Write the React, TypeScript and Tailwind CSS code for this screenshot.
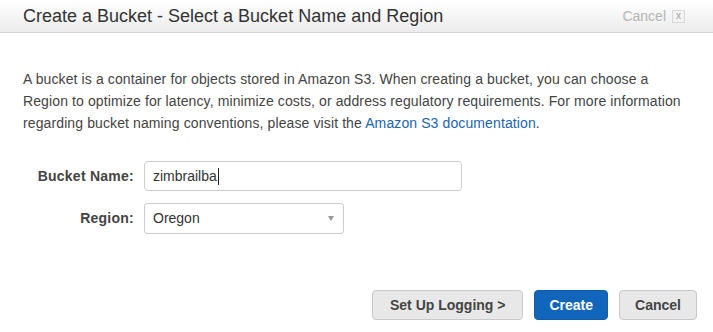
export default function App() {
  return (
    <div
      className="h-[332px] w-[713px] overflow-hidden bg-white text-[#444]"
      style={{ fontFamily: '"Liberation Sans", Arial, sans-serif' }}
    >
      {/* header */}
      <div className="flex h-[33px] items-center justify-between border-b border-[#d5d5d5] bg-gradient-to-b from-white to-[#ececec] pl-[23px] pr-[28px]">
        <h1 className="text-[18px] leading-none text-[#333]">
          Create a Bucket - Select a Bucket Name and Region
        </h1>
        <button className="flex items-center gap-[6px] text-[14px] text-[#b4b4b4]">
          Cancel
          <span className="flex h-[13px] w-[13px] items-center justify-center border border-[#d8d8d8] bg-[#f4f4f4] text-[10px] leading-none text-[#a0a0a0]">
            x
          </span>
        </button>
      </div>

      {/* intro */}
      <p className="mt-[35px] px-[23px] text-[14px] leading-[22px] tracking-[0.11px] text-[#444]">
        A bucket is a container for objects stored in Amazon S3. When creating a bucket, you can choose a
        <br />
        Region to optimize for latency, minimize costs, or address regulatory requirements. For more information
        <br />
        regarding bucket naming conventions, please visit the{" "}
        <a className="text-[#1a64b4]">Amazon S3 documentation</a>.
      </p>

      {/* form */}
      <div className="mt-[27px] grid grid-cols-[134px_auto] items-center gap-x-[10px] gap-y-[12px]">
        <label className="text-right text-[14px] font-bold tracking-[0.25px] text-[#444]">Bucket Name:</label>
        <div className="flex h-[30px] w-[318px] items-center rounded-[4px] border border-[#ccc] px-[8px] text-[14px] text-[#333]">
          zimbrailba<span className="ml-[1px] h-[17px] w-[1px] bg-[#222]" />
        </div>
        <label className="text-right text-[14px] font-bold tracking-[0.25px] text-[#444]">Region:</label>
        <div className="flex h-[31px] w-[200px] items-center justify-between rounded-[3px] border border-[#ccc] pl-[8px] pr-[9px] text-[14px] text-[#333]">
          Oregon
          <span className="h-0 w-0 border-x-[3.5px] border-t-[5px] border-x-transparent border-t-[#999]" />
        </div>
      </div>

      {/* actions */}
      <div className="mt-[56px] flex justify-end pr-[16px]">
        <button className="h-[30px] rounded-[4px] border border-[#c8c8c8] bg-[#e8e8e8] px-[17px] text-[14px] font-bold text-[#444]">
          Set Up Logging &gt;
        </button>
        <button className="ml-[11px] h-[30px] rounded-[4px] border border-[#0f5ca8] bg-[#1166bb] px-[14px] text-[14px] font-bold text-white">
          Create
        </button>
        <button className="ml-[11px] h-[30px] rounded-[4px] border border-[#c8c8c8] bg-[#e8e8e8] px-[15px] text-[14px] font-bold text-[#444]">
          Cancel
        </button>
      </div>
    </div>
  );
}
